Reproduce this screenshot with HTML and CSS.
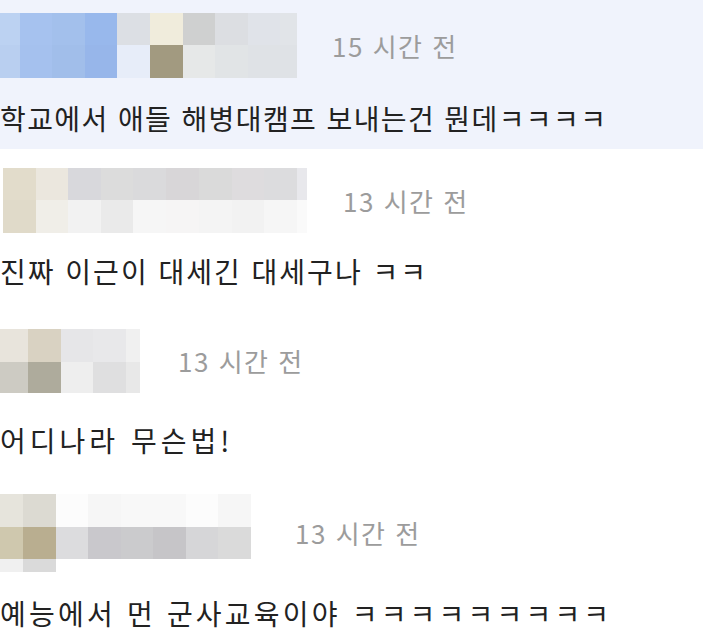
FILE: index.html
```html
<!DOCTYPE html>
<html lang="ko">
<head>
<meta charset="UTF-8">
<title>댓글</title>
<meta name="viewport" content="width=device-width, initial-scale=1">
<link rel="stylesheet" href="styles.css">
</head>
<body>
<div class="comments">
  <div class="comment comment-hl c1">
    <div class="comment-head">
      <div class="mosaic"
        data-cols="20,32,33,32,33,33,32,33,32,17"
        data-rows="32,33"
        data-cells="#bcd2f2,#a6c2ef,#a3c0ec,#98b8ec,#dcdfe4,#f0ecdc,#cfd0d0,#dcdee2,#e0e3e9,#e1e4e8,#b9cff0,#a5c1ee,#a1beea,#97b6ea,#e7edf9,#a29a80,#e6e8e8,#e1e4e6,#dfe2e6,#dfe2e6"></div>
      <span class="comment-time">15 시간 전</span>
    </div>
    <p class="comment-text">학교에서 애들 해병대캠프 보내는건 뭔데ㅋㅋㅋㅋ</p>
  </div>

  <div class="comment c2">
    <div class="comment-head">
      <div class="mosaic"
        data-cols="33,32,33,32,33,33,33,32,33,10"
        data-rows="32,33"
        data-cells="#e2dccb,#ebe7de,#d8d8dc,#dcdcdc,#dadadc,#d8d6d8,#dadada,#dedcde,#dcdcde,#e8e8ec,#e0dac9,#f0eee8,#f2f2f2,#eaeaea,#f6f6f6,#f6f5f5,#f4f4f4,#f2f2f2,#f6f6f6,#fafafa"></div>
      <span class="comment-time">13 시간 전</span>
    </div>
    <p class="comment-text">진짜 이근이 대세긴 대세구나 ㅋㅋ</p>
  </div>

  <div class="comment c3">
    <div class="comment-head">
      <div class="mosaic"
        data-cols="28,33,32,33,14"
        data-rows="33,31"
        data-cells="#e8e4dc,#d9d2c2,#e6e6e8,#e8e8ea,#f0f0f0,#cdcbc3,#aeab9c,#eeeeee,#dfdfe0,#e8e8e8"></div>
      <span class="comment-time">13 시간 전</span>
    </div>
    <p class="comment-text">어디나라 무슨법!</p>
  </div>

  <div class="comment c4">
    <div class="comment-head">
      <div class="mosaic"
        data-cols="23,33,32,33,32,33,32,33"
        data-rows="33,32,13"
        data-cells="#e6e4dc,#dcdad2,#fcfcfc,#f6f6f6,#f8f8f8,#f8f8f8,#fcfcfc,#f6f6f6,#cfc8ae,#b9ae90,#dcdcde,#c9c8cc,#cbcbcd,#c6c5c8,#d6d6d8,#dadada,#f0f0f0,#dadada"></div>
      <span class="comment-time">13 시간 전</span>
    </div>
    <p class="comment-text">예능에서 먼 군사교육이야 ㅋㅋㅋㅋㅋㅋㅋㅋㅋ</p>
  </div>
</div>

<script src="script.js"></script>
</body>
</html>
```

FILE: styles.css
```css
body {
  margin: 0;
  background: #fff;
  font-family: "Noto Sans CJK KR", "Noto Sans", sans-serif;
  color: #222;
}

.comments {
  width: 703px;
}

.comment {
  padding: 18px 0 0;
}
.comment-hl {
  background: #f0f3fc;
}

.comment-head {
  display: flex;
  align-items: center;
  gap: 35px;
}

.mosaic {
  display: grid;
}
.mosaic span {
  display: block;
}

.comment-time {
  font-size: 26px;
  line-height: 30px;
  letter-spacing: 1.5px;
  color: #9c9c9c;
}

.comment-text {
  margin: 25px 0 0;
  font-size: 28px;
  line-height: 30px;
  white-space: nowrap;
}

/* per comment spacing, the source is a stitched capture */
.c1 {
  padding: 13px 0 16px;
}
.c1 .comment-text {
  letter-spacing: 1.4px;
}
.c2 {
  padding-top: 19px;
}
.c2 .comment-head {
  gap: 36px;
  padding-left: 3px;
}
.c2 .comment-text {
  margin-top: 23px;
  letter-spacing: 2px;
}
.c3 {
  padding-top: 43px;
}
.c3 .comment-head {
  gap: 38px;
}
.c3 .comment-text {
  margin-top: 32px;
  letter-spacing: 4px;
}
.c4 {
  padding-top: 39px;
}
.c4 .comment-head {
  gap: 44px;
}
.c4 .comment-text {
  margin-top: 26px;
  letter-spacing: 3.2px;
}
```

FILE: script.js
```js
// build the blurred name blocks from the data attributes
document.querySelectorAll(".mosaic").forEach(el => {
  const cols = el.dataset.cols.split(",");
  const rows = el.dataset.rows.split(",");
  const cells = el.dataset.cells.split(",");
  el.style.gridTemplateColumns = cols.map(c => c + "px").join(" ");
  el.style.gridTemplateRows = rows.map(r => r + "px").join(" ");
  cells.forEach(color => {
    const cell = document.createElement("span");
    cell.style.background = color;
    el.appendChild(cell);
  });
});
```
